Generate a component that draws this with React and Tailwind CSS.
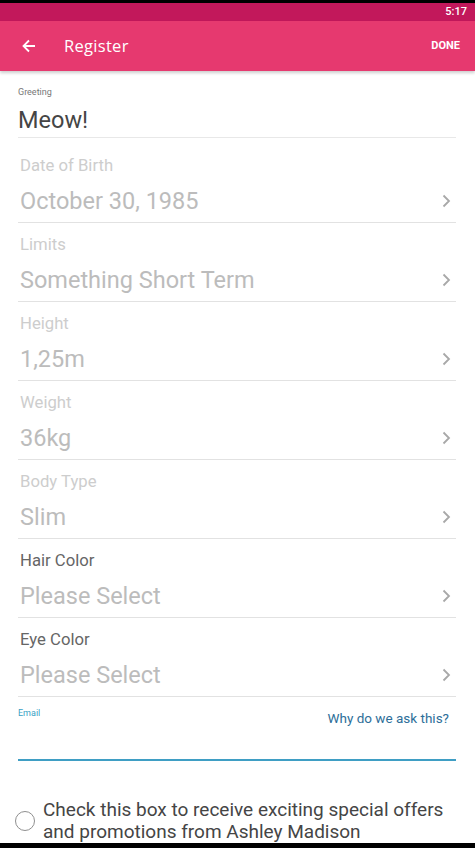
import React from 'react';

const Chevron = () => (
  <svg width="10" height="16" viewBox="0 0 10 16" className="shrink-0">
    <path d="M2.5 2.5 L8 8 L2.5 13.5" fill="none" stroke="#a8a8a8" strokeWidth="1.8" />
  </svg>
);

const SelectRow = ({ label, value, top = 'pt-[12px]', labelColor = 'text-[#cdcdcd]' }) => (
  <div className={`${top} pb-[6px] border-b border-[#e2e2e2]`}>
    <div className={`pl-[2px] text-[16.7px] leading-[20px] ${labelColor}`}>{label}</div>
    <div className="mt-[10px] pl-[2px] pr-[5px] h-[30px] flex items-center justify-between">
      <span className="text-[23.5px] leading-[30px] text-[#bcbcbc]">{value}</span>
      <Chevron />
    </div>
  </div>
);

export default function App() {
  return (
    <div className="w-[475px] h-[848px] bg-white overflow-hidden flex flex-col font-['Roboto',sans-serif]">
      <div className="h-[3px] bg-black shrink-0" />
      <div className="h-[18px] bg-[#c2185b] flex items-center justify-end pr-[8px] shrink-0">
        <span className="text-white text-[11px] font-medium">5:17</span>
      </div>
      <div className="h-[50px] bg-[#e6396f] flex items-center shadow-[0_2px_3px_rgba(0,0,0,0.2)] shrink-0 relative z-10">
        <svg width="16" height="16" viewBox="0 0 16 16" className="ml-[21px]">
          <path d="M14 8 H2.5 M8 2.5 L2.5 8 L8 13.5" fill="none" stroke="white" strokeWidth="1.8" />
        </svg>
        <span className="ml-[27px] text-white text-[16.5px] font-['Open_Sans',sans-serif] tracking-[0.3px]">Register</span>
        <span className="ml-auto mr-[15px] text-white text-[11px] font-bold">DONE</span>
      </div>

      <div className="pl-[18px] pr-[19px] flex-1">
        <div className="pt-[15px] pb-[2px] border-b border-[#e8e8e8]">
          <div className="text-[9px] leading-[12px] text-[#777]">Greeting</div>
          <div className="mt-[7px] text-[23.5px] leading-[30px] text-[#454545]">Meow!</div>
        </div>
        <SelectRow label="Date of Birth" value="October 30, 1985" top="pt-[18px]" />
        <SelectRow label="Limits" value="Something Short Term" />
        <SelectRow label="Height" value="1,25m" />
        <SelectRow label="Weight" value="36kg" />
        <SelectRow label="Body Type" value="Slim" />
        <SelectRow label="Hair Color" value="Please Select" labelColor="text-[#666]" />
        <SelectRow label="Eye Color" value="Please Select" labelColor="text-[#666]" />

        <div className="pt-[10px] border-b-2 border-[#3f9ec4] h-[64px]">
          <div className="flex justify-between items-start">
            <span className="text-[9px] leading-[12px] text-[#3a9fc4]">Email</span>
            <span className="mt-[3px] mr-[7px] text-[13.5px] leading-[16px] text-[#2d6e99]">Why do we ask this?</span>
          </div>
        </div>

        <div className="mt-[38px] flex items-start">
          <div className="mt-[12px] ml-[-3px] w-[20px] h-[20px] rounded-full border-[1.5px] border-[#8f8f8f] shrink-0" />
          <div className="ml-[8px] text-[19px] leading-[22px] text-[#454545]">
            Check this box to receive exciting special offers and promotions from Ashley Madison
          </div>
        </div>
      </div>
      <div className="h-[6px] bg-black shrink-0 relative z-10" />
    </div>
  );
}
